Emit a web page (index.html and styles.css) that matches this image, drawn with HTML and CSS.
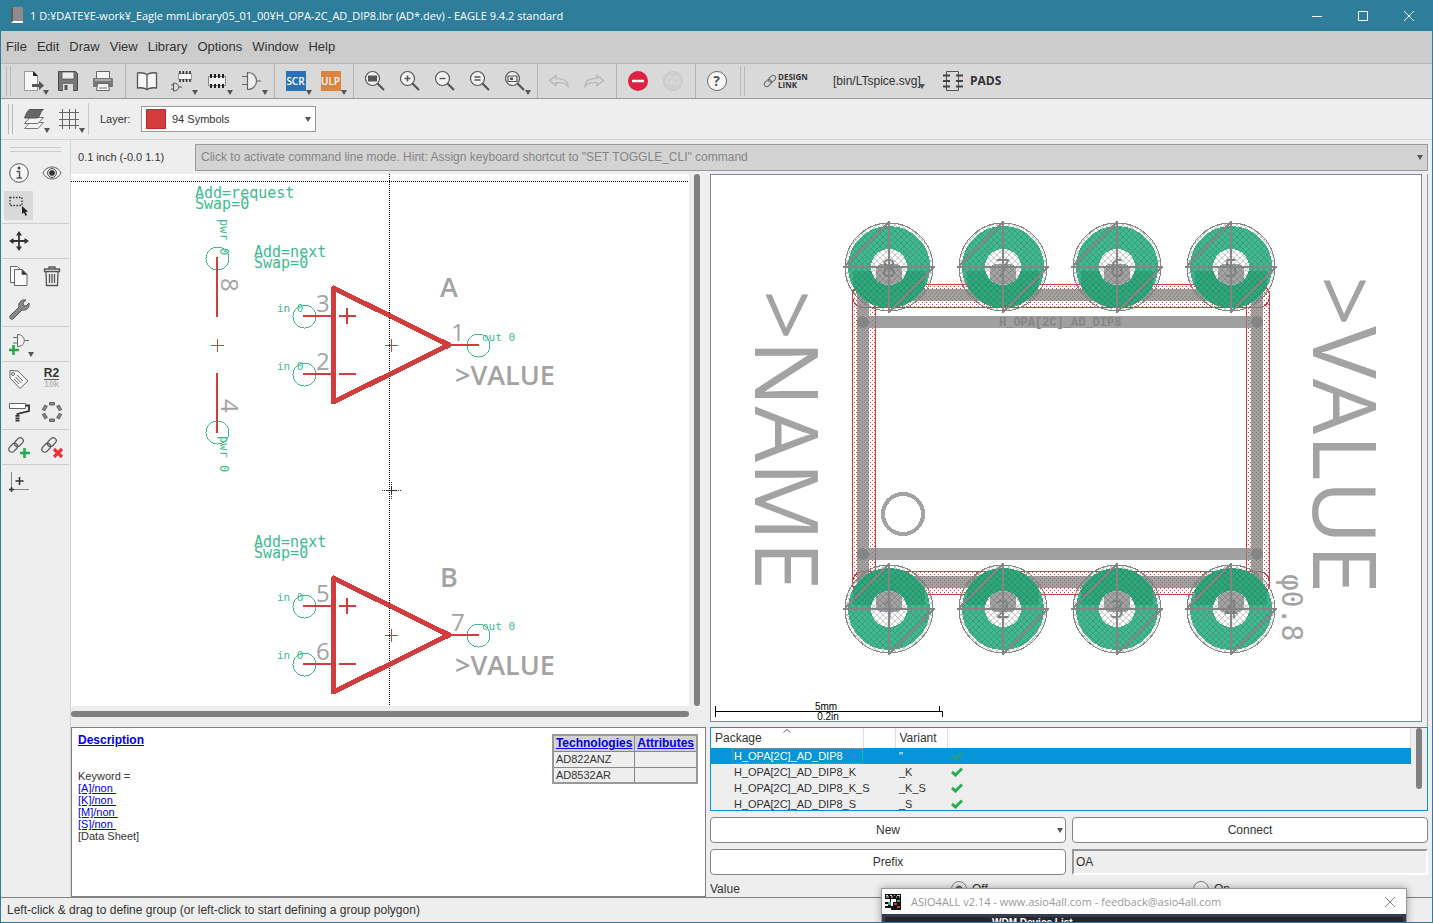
FILE: index.html
```html
<!DOCTYPE html>
<html lang="en">
<head>
<meta charset="utf-8">
<title>EAGLE 9.4.2 standard</title>
<link rel="stylesheet" href="styles.css">
</head>
<body>
<div class="window">
  <header class="titlebar">
    <svg class="app-icon" viewBox="0 0 14 18"><path d="M1 2 3 0h10v14H3l-2 2z" fill="#8f8b8b"/><path d="M1 2 3 0v14l-2 2z" fill="#5d5a5a"/><path d="M3 14h10v2H1z" fill="#fff"/></svg>
    <h1 class="title">1 D:¥DATE¥E-work¥_Eagle mmLibrary05_01_00¥H_OPA-2C_AD_DIP8.lbr (AD*.dev) - EAGLE 9.4.2 standard</h1>
    <div class="win-buttons">
      <button class="win-btn" aria-label="Minimize"><svg viewBox="0 0 12 12"><path d="M1 6.500h10"/></svg></button>
      <button class="win-btn" aria-label="Maximize"><svg viewBox="0 0 12 12"><path d="M1.500 1.500h9v9h-9z"/></svg></button>
      <button class="win-btn" aria-label="Close"><svg viewBox="0 0 12 12"><path d="m1 1 10 10M11 1 1 11"/></svg></button>
    </div>
  </header>

  <nav class="menubar">
    <a href="#file">File</a><a href="#edit">Edit</a><a href="#draw">Draw</a><a href="#view">View</a><a href="#library">Library</a><a href="#options">Options</a><a href="#window">Window</a><a href="#help">Help</a>
  </nav>

  <div class="toolbar">
    <span class="grip"></span>
    <button class="tool drop" aria-label="Open"><svg viewBox="0 0 22 22"><path d="M2.500 1.500h9l4 4v15h-13z" fill="#f7f7f7" stroke="#999"/><path d="M11 1v5h5z" fill="#222"/><path d="M10 14h7v-3l5 4.500-5 4.500v-3h-7z" fill="#555"/></svg></button>
    <button class="tool" aria-label="Save"><svg viewBox="0 0 22 22"><path d="M1.500 1.500h17l2 2v17h-19z" fill="#777" stroke="#4a4a4a"/><path d="M5 2h12v7H5z" fill="#eee" stroke="#555" stroke-width=".8"/><path d="M6 14h10v7H6z" fill="#ddd"/><path d="M7.500 15h3v5h-3z" fill="#555"/></svg></button>
    <button class="tool" aria-label="Print"><svg viewBox="0 0 22 22"><path d="M4.500 1.500h13v7h-13z" fill="#f4f4f4" stroke="#666"/><rect x="1" y="8" width="20" height="9" rx="1" fill="#777"/><path d="M3 10h16" stroke="#ddd"/><path d="M5.500 13.500h11l1 7h-13z" fill="#f4f4f4" stroke="#666"/><path d="M7 18h8" stroke="#777"/></svg></button>
    <span class="sep"></span>
    <button class="tool" aria-label="Library"><svg viewBox="0 0 22 22" fill="#f7f7f7" stroke="#555" stroke-width="1.300"><path d="M11 4.500C8 2.500 5 2.500 1.500 3v15c3.500-.5 6.500-.5 9.500 1.500 3-2 6-2 9.500-1.500V3C17 2.500 14 2.500 11 4.500zv15"/></svg></button>
    <button class="tool drop" aria-label="Device"><svg viewBox="0 0 22 22" fill="none" stroke="#333"><path d="M7.500 3.500h13v6h-13z" fill="#f7f7f7" stroke="#999"/><path d="M9 1v3M12.300 1v3M15.600 1v3M19 1v3M9 9v3M12.300 9v3M15.600 9v3M19 9v3" stroke-width="1.600"/><path d="M2.500 13v8c7 0 7-8 0-8zM0 15h2.500M0 19h2.500M8 17h3" stroke="#555"/></svg></button>
    <button class="tool drop" aria-label="Package"><svg viewBox="0 0 22 22" stroke="#222"><path d="M2.500 6.500h17v9h-17z" fill="#f0f0f0" stroke="#888"/><path d="M5 4v4M9 4v4M13 4v4M17 4v4M5 14v4M9 14v4M13 14v4M17 14v4" stroke-width="2"/></svg></button>
    <button class="tool drop" aria-label="Symbol"><svg viewBox="0 0 22 22" fill="#eee" stroke="#666" stroke-width="1.200"><path d="M6.500 2.500v17c12 0 12-17 0-17zM1 6.500h5.500M1 14.500h5.500M15.500 11H20"/></svg></button>
    <span class="sep"></span>
    <button class="tool drop"><span class="chip scr">SCR</span></button>
    <button class="tool drop"><span class="chip ulp">ULP</span></button>
    <span class="sep"></span>
    <button class="tool" aria-label="Zoom fit"><svg viewBox="0 0 22 22"><use href="#lens"/><path d="M4 5.500h9v6H4z" fill="#555"/></svg></button>
    <button class="tool" aria-label="Zoom in"><svg viewBox="0 0 22 22"><use href="#lens"/><path d="M8.500 5.500v6M5.500 8.500h6" stroke="#555" stroke-width="1.400"/></svg></button>
    <button class="tool" aria-label="Zoom out"><svg viewBox="0 0 22 22"><use href="#lens"/><path d="M5.500 8.500h6" stroke="#555" stroke-width="1.400"/></svg></button>
    <button class="tool" aria-label="Zoom redraw"><svg viewBox="0 0 22 22"><use href="#lens"/><path d="M5.500 7h6M5.500 10h6" stroke="#555" stroke-width="1.400"/></svg></button>
    <button class="tool drop" aria-label="Zoom select"><svg viewBox="0 0 22 22"><use href="#lens"/><path d="M4 6h9v5.500H4z" fill="#eee" stroke="#555" stroke-width="1.200"/><path d="M6 7.500h3v2.500H6z" fill="#555"/></svg></button>
    <span class="sep"></span>
    <button class="tool" aria-label="Undo"><svg viewBox="0 0 22 22" fill="none" stroke="#b3b3b3" stroke-width="1.200"><path d="M1.500 10.500 8 5.500v3c8 0 12 2 12 8-3-4-6-4-12-4v3z"/></svg></button>
    <button class="tool" aria-label="Redo"><svg viewBox="0 0 22 22" fill="none" stroke="#b3b3b3" stroke-width="1.200"><path d="M20.500 10.500 14 5.500v3c-8 0-12 2-12 8 3-4 6-4 12-4v3z"/></svg></button>
    <span class="sep"></span>
    <button class="tool" aria-label="Stop"><svg viewBox="0 0 22 22"><circle cx="11" cy="11" r="10" fill="#dd2140"/><path d="M5 11h12" stroke="#fff" stroke-width="2.500"/></svg></button>
    <button class="tool"><span class="go">GO</span></button>
    <span class="sep"></span>
    <button class="tool"><span class="help">?</span></button>
    <span class="grip late"></span>
    <button class="tool-text design"><svg viewBox="0 0 14 14" fill="none" stroke="#666"><g transform="rotate(-45 7 7)"><rect x="0" y="4.500" width="8" height="5" rx="2.500"/><rect x="6" y="4.500" width="8" height="5" rx="2.500"/></g></svg><span>DESIGN<br>LINK</span></button>
    <button class="tool-text spice drop">[bin/LTspice.svg]</button>
    <button class="tool-text pads"><svg viewBox="0 0 20 22" fill="none" stroke="#555"><path d="M3.500 1.500h12v19h-12z"/><path d="M0 5.500h7M0 11h7M0 16.500h7M13 5.500h7M13 11h7M13 16.500h7" stroke="#444" stroke-width="2"/></svg><span>PADS</span></button>
  </div>

  <div class="toolbar second">
    <span class="grip"></span>
    <button class="tool drop" aria-label="Layers"><svg viewBox="0 0 22 22" stroke="#777"><path d="M1.500 20.500 7 14.500h13.500L15 20.500z" fill="#f5f5f5"/><path d="M1.500 15.500 7 9.500h13.500L15 15.500z" fill="#f5f5f5"/><path d="M1.500 10C4 3.500 5 1.500 8 1.500h12.500C17 3 17 10 14 10z" fill="#666" stroke="#555"/></svg></button>
    <button class="tool drop" aria-label="Grid"><svg viewBox="0 0 22 22" stroke="#666"><path d="M4.500 1v20M11.500 1v20M17.500 1v20M1 4.500h20M1 11.500h20M1 17.500h20"/></svg></button>
    <span class="sep"></span>
    <label class="layer-label" for="layer">Layer:</label>
    <span class="layer-box"><select id="layer"><option>94 Symbols</option></select><span class="swatch"></span></span>
  </div>

  <main class="workspace">
    <aside class="palette">
      <span class="hgrip"></span>
      <div class="pgroup">
        <button aria-label="Info"><svg viewBox="0 0 22 22"><circle cx="11" cy="11" r="9.300" fill="#f7f7f7" stroke="#555"/><circle cx="11" cy="6" r="1.500" fill="#444"/><path d="M8.500 9.500h3V16M8.500 16h5.500" stroke="#555" stroke-width="1.500" fill="none"/></svg></button>
        <button aria-label="Show"><svg viewBox="0 0 22 22"><path d="M2 11c4-8 14-8 18 0-4 8-14 8-18 0z" fill="#f7f7f7" stroke="#555"/><circle cx="11" cy="11" r="4.500" fill="#ddd" stroke="#555"/><circle cx="11" cy="11" r="2.800" fill="#333"/></svg></button>
        <button class="active" aria-label="Group"><svg viewBox="0 0 22 22"><path d="M2 2.500h12v8H2z" fill="none" stroke="#333" stroke-width="1.300" stroke-dasharray="1.500 1.500"/><path d="M14 11v8l2-1.500 1.500 3.500 1.500-1-1.500-3 2.500-.5z" fill="#222"/></svg></button>
      </div>
      <div class="pgroup"><button aria-label="Move"><svg viewBox="0 0 22 22"><path d="M11 3v16M3 11h16" stroke="#333" stroke-width="1.800"/><path d="m11 1 3 4.500H8zM11 21l3-4.500H8zM1 11l4.500-3v6zM21 11l-4.500-3v6z" fill="#333"/></svg></button></div>
      <div class="pgroup">
        <button aria-label="Copy"><svg viewBox="0 0 22 22" fill="#fafafa" stroke="#666"><path d="M2.500 1.500h7l3 3v13h-10z"/><path d="M6.500 4.500H14l5 5v11H6.500z"/><path d="M14 4.500v5h5z" fill="#333"/></svg></button>
        <button aria-label="Delete"><svg viewBox="0 0 22 22" fill="none" stroke="#555" stroke-width="1.300"><path d="M8 3.500V2h6v1.500M3.500 4h15v2.500h-15zM5 6.500l.5 14h11l.5-14M8.500 9v9M11 9v9M13.500 9v9"/></svg></button>
        <button aria-label="Change"><svg viewBox="0 0 22 22"><path d="M2 18 11 9c-1-4 2-8 7-7l-3 3 .5 2.500L18 8l3-3c1 5-3 8-7 7l-9 9c-2 1-4-1-3-3z" fill="#888" stroke="#555"/></svg></button>
      </div>
      <div class="pgroup"><button class="drop" aria-label="Add gate"><svg viewBox="0 0 22 22" fill="#f2f2f2" stroke="#666"><path d="M9.500 1.500v12c9 0 9-12 0-12zM5 4.500h4.500M5 10h4.500M16.500 7.500H21"/><path d="M5.500 12v10M1 17h10" stroke="#28a850" stroke-width="2.600"/></svg></button></div>
      <div class="pgroup">
        <button aria-label="Name"><svg viewBox="0 0 22 22" fill="#f7f7f7" stroke="#666"><path d="M2 2.500 10 3l10 10-8 7.500L2 10z"/><circle cx="5" cy="6" r="1.500"/><path d="m9 7 6 6M7.500 9l6 6M6 11l5 5"/></svg></button>
        <button class="r2"><b>R2</b><small>10k</small></button>
        <button aria-label="Paint"><svg viewBox="0 0 22 22" fill="none" stroke="#333"><path d="M1.500 2.500h16v5h-16z" fill="#fff" stroke="#666"/><path d="M18 4.500h3V10L9.500 13v2" stroke-width="1.800"/><path d="M9.500 14v7" stroke-width="4" stroke-dasharray="1.800 .6"/></svg></button>
        <button aria-label="Ring"><svg viewBox="0 0 22 22" fill="#888" stroke="#666"><g id="seg"><path d="M8.500 1.500h5v2.500h-5zM8.500 18h5v2.500h-5z"/></g><use href="#seg" transform="rotate(60 11 11)"/><use href="#seg" transform="rotate(120 11 11)"/></svg></button>
      </div>
      <div class="pgroup">
        <button aria-label="Connect"><svg viewBox="0 0 22 22"><use href="#chain"/><path d="M16.500 12v10M12 17h10" stroke="#28a850" stroke-width="2.600"/></svg></button>
        <button aria-label="Disconnect"><svg viewBox="0 0 22 22"><use href="#chain"/><path d="m13 13 8 8M21 13l-8 8" stroke="#ee3030" stroke-width="3.200"/></svg></button>
      </div>
      <div class="pgroup"><button aria-label="Mark"><svg viewBox="0 0 22 22" stroke="#333"><path d="M3.500 1v15M6 18.500h15" stroke="#888"/><path d="M11.500 6v8M7.500 10h8M3.500 16v5M1 18.500h5" stroke-width="1.500"/></svg></button></div>
    </aside>

    <section class="work">
      <div class="command">
        <label for="cmd">0.1 inch (-0.0 1.1)</label>
        <span class="cmd-box"><input id="cmd" type="text" placeholder="Click to activate command line mode. Hint: Assign keyboard shortcut to &quot;SET TOGGLE_CLI&quot; command"></span>
      </div>

      <div class="panes">
        <div class="left">
          <div class="schematic">
            <svg class="sheet" role="img" aria-label="Device symbols">
              <g transform="translate(-71 -174)">
                <path class="guide" d="M71 181.500h2000M389.500 174v2000"/>
                <path d="M382 490.500h19M391.500 482v18" stroke="#333" fill="none" stroke-dasharray="1 1"/>
                <path d="M387 490.500h9M391.500 486v9" stroke="#333" fill="none"/>
                <g class="pin-text attr"><text x="195" y="198">Add=request</text><text x="195" y="209">Swap=0</text><text x="254" y="257">Add=next</text><text x="254" y="268">Swap=0</text><text x="254" y="547">Add=next</text><text x="254" y="558">Swap=0</text></g>
                <g class="pin-text pwr"><text transform="translate(220 219) rotate(90)">pwr 0</text><text transform="translate(220 436) rotate(90)">pwr 0</text></g>
                <g class="pin"><circle cx="217.500" cy="258.500" r="11.500"/><circle cx="217.500" cy="432.500" r="11.500"/></g>
                <g class="num"><text transform="translate(221 278) rotate(90)">8</text><text transform="translate(221 399) rotate(90)">4</text></g>
                <path class="wire" d="M217 257v60M217 373v60"/>
                <path class="origin" d="M211 345.500h13M217.500 339v13"/>
                <g id="amp">
                  <g class="pin"><circle cx="304.500" cy="316.500" r="11.500"/><circle cx="304.500" cy="374.500" r="11.500"/><circle cx="478.500" cy="345.500" r="11.500"/></g>
                  <path class="body" d="M333.500 288v114L449 345z"/>
                  <path class="wire" d="M303 316h29M303 374h29M451 345h28M339 316h17M347 308v16M339 374h17"/>
                  <path class="origin" d="M385 345.500h13M391.500 339v13"/>
                </g>
                <use href="#amp" y="290"/>
                <g class="pin-text io"><text x="277" y="312">in 0</text><text x="277" y="370">in 0</text><text x="482" y="341">out 0</text><text x="277" y="601">in 0</text><text x="277" y="659">in 0</text><text x="482" y="630">out 0</text></g>
                <g class="num"><text x="316" y="312">3</text><text x="316" y="370">2</text><text x="451" y="341">1</text><text x="316" y="602">5</text><text x="316" y="660">6</text><text x="451" y="631">7</text></g>
                <g class="ref"><text x="440" y="297">A</text><text x="440" y="587">B</text><text x="455" y="385">&gt;VALUE</text><text x="455" y="675">&gt;VALUE</text></g>
              </g>
            </svg>
            <div class="vscroll"></div>
            <div class="hscroll"></div>
          </div>
          <div class="description">
            <div class="desc-text">
              <a class="desc-head" href="#description">Description</a>
              <p>Keyword =<br><a href="#a">[A]/non&nbsp;</a><br><a href="#k">[K]/non&nbsp;</a><br><a href="#m">[M]/non&nbsp;</a><br><a href="#s">[S]/non&nbsp;</a><br>[Data Sheet]</p>
            </div>
            <table class="tech">
              <thead><tr><th><a href="#technologies">Technologies</a></th><th><a href="#attributes">Attributes</a></th></tr></thead>
              <tbody><tr><td>AD822ANZ</td><td></td></tr><tr><td>AD8532AR</td><td></td></tr></tbody>
            </table>
          </div>
        </div>

        <div class="right">
          <div class="board-wrap">
          <div class="board">
            <svg class="sheet" role="img" aria-label="Package footprint">
              <defs>
                <pattern id="dots" width="4" height="4" patternUnits="userSpaceOnUse"><path d="M0 0h1v1H0zM2 2h1v1H2z" fill="#d33c3c"/></pattern>
                <pattern id="hatch" width="6" height="6" patternUnits="userSpaceOnUse"><path d="M-1-1l8 8M-1 7l8-8" stroke="#555" stroke-opacity=".4" stroke-width=".8"/></pattern>
                <clipPath id="ring"><path clip-rule="evenodd" d="M-41 0a41 41 0 1 0 82 0a41 41 0 1 0-82 0zM-18 0a18 18 0 1 0 36 0a18 18 0 1 0-36 0z"/></clipPath>
                <clipPath id="hole"><circle r="18"/></clipPath>
                <g id="copper">
                  <circle r="29.500" fill="none" stroke="#3dbb8f" stroke-width="23"/>
                  <rect x="-36" y="4" width="72" height="40" fill="#2aa97c" clip-path="url(#ring)"/>
                  <circle r="18" fill="#fff"/>
                  <path d="M-13 3a6 6 0 0 1 6-6H7a6 6 0 0 1 6 6v16h-26z" fill="#a3a3a3" clip-path="url(#hole)"/>
                </g>
                <g id="marks" fill="none" stroke="#858585">
                  <circle r="44" fill="url(#hatch)"/>
                  <path d="M-46 0h92M0-46v92M-44-1 0-45M0 45 44 1" stroke-width="2"/>
                </g>
              </defs>
              <g transform="translate(-711 -175)">
                <g fill="url(#dots)" stroke="#d33c3c">
                  <rect x="852.500" y="284.500" width="417" height="23" rx="11"/>
                  <rect x="852.500" y="571.500" width="417" height="23" rx="11"/>
                  <rect x="852.500" y="288.500" width="23" height="300" rx="4"/>
                  <rect x="1246.500" y="288.500" width="23" height="300" rx="4"/>
                </g>
                <g fill="none" stroke="#858585" stroke-opacity=".78" stroke-width="12">
                  <path d="M863 295h394v287H863z"/>
                  <path d="M869 322h382M869 554h382"/>
                </g>
                <g fill="#858585"><circle cx="863" cy="322" r="6"/><circle cx="1257" cy="322" r="6"/><circle cx="863" cy="554" r="6"/><circle cx="1257" cy="554" r="6"/></g>
                <circle cx="903" cy="514" r="20" fill="none" stroke="#a3a3a3" stroke-width="4"/>
                <text class="pkg-name" x="999" y="326">H_OPA[2C]_AD_DIP8</text>
                <use href="#copper" transform="translate(889 267)"/><use href="#copper" transform="translate(1003 267)"/><use href="#copper" transform="translate(1117 267)"/><use href="#copper" transform="translate(1231 267)"/>
                <use href="#copper" transform="translate(889 609) scale(1 -1)"/><use href="#copper" transform="translate(1003 609) scale(1 -1)"/><use href="#copper" transform="translate(1117 609) scale(1 -1)"/><use href="#copper" transform="translate(1231 609) scale(1 -1)"/>
                <g class="pad-num"><text x="889" y="277">8</text><text x="1003" y="277">7</text><text x="1117" y="277">6</text><text x="1231" y="277">5</text><text x="889" y="618">1</text><text x="1003" y="618">2</text><text x="1117" y="618">3</text><text x="1231" y="618">4</text></g>
                <use href="#marks" transform="translate(889 267)"/><use href="#marks" transform="translate(1003 267)"/><use href="#marks" transform="translate(1117 267)"/><use href="#marks" transform="translate(1231 267)"/>
                <use href="#marks" transform="translate(889 609)"/><use href="#marks" transform="translate(1003 609)"/><use href="#marks" transform="translate(1117 609)"/><use href="#marks" transform="translate(1231 609)"/>
                <g class="big"><text transform="translate(755 290) rotate(90)">&gt;NAME</text><text transform="translate(1313 276) rotate(90)">&gt;VALUE</text></g>
                <text class="drill" transform="translate(1282 574) rotate(90)">φ0.8</text>
                <path d="M715.500 706v11M715 711.500h228M939.500 706v6M942.500 711v6" stroke="#000" fill="none"/>
                <g class="scale"><text x="826" y="710">5mm</text><text x="828" y="720">0.2in</text></g>
              </g>
            </svg>
          </div>
          </div>

          <div class="packages">
            <div class="list">
              <table>
                <thead><tr><th class="c-name">Package<svg class="sort" viewBox="0 0 8 4"><path d="m.5 3.500 3.500-3 3.500 3" fill="none" stroke="#666"/></svg></th><th class="c-gap"></th><th class="c-var">Variant</th><th></th></tr></thead>
                <tbody>
                  <tr class="sel"><td><span>H_OPA[2C]_AD_DIP8</span></td><td></td><td>"</td><td><svg class="check" viewBox="0 0 12 10"><path d="m1 5 3.500 3L11 1.500"/></svg></td></tr>
                  <tr><td><span>H_OPA[2C]_AD_DIP8_K</span></td><td></td><td>_K</td><td><svg class="check" viewBox="0 0 12 10"><path d="m1 5 3.500 3L11 1.500"/></svg></td></tr>
                  <tr><td><span>H_OPA[2C]_AD_DIP8_K_S</span></td><td></td><td>_K_S</td><td><svg class="check" viewBox="0 0 12 10"><path d="m1 5 3.500 3L11 1.500"/></svg></td></tr>
                  <tr><td><span>H_OPA[2C]_AD_DIP8_S</span></td><td></td><td>_S</td><td><svg class="check" viewBox="0 0 12 10"><path d="m1 5 3.500 3L11 1.500"/></svg></td></tr>
                </tbody>
              </table>
              <div class="list-scroll"><span></span></div>
            </div>
            <div class="form">
              <button class="btn new">New</button>
              <button class="btn">Connect</button>
              <button class="btn">Prefix</button>
              <input class="prefix" type="text" value="OA" aria-label="Prefix value">
            </div>
            <div class="value-row">
              <span>Value</span>
              <label><input type="radio" name="value" checked>Off</label>
              <label><input type="radio" name="value">On</label>
            </div>
          </div>
        </div>
      </div>
    </section>
  </main>

  <footer class="status">Left-click &amp; drag to define group (or left-click to start defining a group polygon)</footer>

  <div class="popup">
    <div class="popup-title">
      <svg class="asio" viewBox="0 0 16 16"><path d="M0 0h16v16H0z" fill="#111"/><path d="M1 1.500h2M5 1.500h2M9 1.500h1M12 1.500h3M1 3h3M6 3h2M11 3h1M14 3h1" stroke="#ddd"/><path d="M0 5h5v3H0zM0 10h3v2H0zM6 5h5v3H8v4H6zM0 14h6v2H0z" fill="#fff"/><path d="M3 8h3v3H3zM12 6h3v2h-3z" fill="#3a8"/><path d="M9 9h3v2H9zM12 12h3v2h-3z" fill="#c33"/></svg>
      <span>ASIO4ALL v2.14 - www.asio4all.com - feedback@asio4all.com</span>
      <button aria-label="Close"><svg viewBox="0 0 12 12"><path d="m1 1 10 10M11 1 1 11" stroke="#888" fill="none"/></svg></button>
    </div>
    <div class="popup-body"><div>WDM Device List</div></div>
  </div>
</div>

<svg class="defs" aria-hidden="true">
  <defs>
    <g id="lens"><circle cx="8.500" cy="8.500" r="7" fill="#f3f3f3" stroke="#555" stroke-width="1.200"/><path d="m13.500 13.500 6.500 6.500" stroke="#555" stroke-width="2.200"/></g>
    <g id="chain" fill="none" stroke="#555" stroke-width="1.200"><g transform="rotate(-45 8 9)"><rect x="-1" y="6" width="10" height="6" rx="3"/><rect x="7" y="6" width="10" height="6" rx="3"/></g></g>
  </defs>
</svg>
</body>
</html>
```

FILE: styles.css
```css
* { box-sizing: border-box; }
body { margin: 0; font: 11px/12px "Liberation Sans", Arial, sans-serif; color: #333; }
button { border: 0; background: none; padding: 0; font: inherit; color: inherit; }
svg { display: block; }
.defs { position: absolute; width: 0; height: 0; }
.window { position: relative; display: flex; flex-direction: column; height: 100vh; background: #eee; border: 1px solid #2e7d9b; border-top: 0; overflow: hidden; }

.titlebar { display: flex; align-items: center; height: 31px; background: #2e7d9b; color: #fff; flex: none; }
.app-icon { width: 14px; height: 18px; margin: 0 6px 0 9px; }
.title { margin: 0; font: 11px/16px "Open Sans", "Noto Sans", sans-serif; white-space: nowrap; }
.win-buttons { display: flex; margin-left: auto; }
.win-btn { width: 46px; height: 31px; display: grid; place-items: center; }
.win-btn svg { width: 12px; height: 12px; fill: none; stroke: #fff; }

.menubar { display: flex; align-items: center; gap: 10px; height: 32px; padding: 0 5px; background: #ccc; flex: none; font-size: 13px; line-height: 16px; }
.menubar a { color: #333; text-decoration: none; }

.toolbar { display: flex; align-items: center; height: 36px; background: #d9d9d9; border-top: 1px solid #b5b5b5; border-bottom: 1px solid #999; flex: none; }
.toolbar.second { height: 41px; background: #eee; border-top: 0; border-bottom-color: #d5d5d5; }
.grip { width: 5px; height: 30px; margin: 0 4px 0 5px; border: solid #b8b8b8; border-width: 0 1px; flex: none; }
.grip.late { margin: 0 18px 0 6px; }
.second .grip { margin: 0 3px 0 7px; }
.sep { width: 1px; align-self: stretch; margin: 0 3px 0 5px; background: #b5b5b5; flex: none; }
.second .sep { margin: 4px 11px 4px 2px; background: #ccc; }
.tool { position: relative; width: 35px; height: 33px; display: grid; place-items: center; flex: none; }
.tool svg { width: 22px; height: 22px; }
.drop { position: relative; }
.drop::after { content: ""; position: absolute; right: 1px; bottom: 3px; border: 3px solid transparent; border-top: 5px solid #555; border-bottom: 0; }
.chip { width: 20px; height: 20px; font: 600 10px/20px "Open Sans", sans-serif; color: #fff; text-align: center; }
.scr { background: #2a72b8; }
.ulp { background: #dc8340; }
.go { width: 20px; height: 20px; border: 1px solid #c6c6c6; border-radius: 50%; font: 9px/18px "Open Sans", sans-serif; color: #e2e2e2; background: #d0d0d0; }
.help { width: 20px; height: 20px; border: 1px solid #666; border-radius: 50%; background: #f7f7f7; font: bold 14px/18px "Open Sans", sans-serif; color: #555; }
.tool-text { display: flex; align-items: center; text-align: left; flex: none; color: #333; }
.design { width: 70px; gap: 1px; font: bold 8px/8px "Open Sans", sans-serif; }
.design svg { width: 14px; height: 14px; }
.spice { height: 20px; width: 93px; font-size: 12px; }
.spice::after { bottom: 2px; }
.pads { gap: 7px; margin-left: 17px; font: bold 12px/16px "Open Sans", sans-serif; }
.pads svg { width: 20px; height: 22px; }
.layer-label { width: 41px; }
.layer-box { position: relative; width: 175px; height: 26px; }
.layer-box select { width: 100%; height: 100%; appearance: none; border: 1px solid #999; background: #fff; padding: 0 0 0 30px; font: inherit; color: #333; }
.layer-box::after, .cmd-box::after, .new::after { content: ""; position: absolute; right: 5px; top: 50%; margin-top: -2px; border: 3px solid transparent; border-top: 5px solid #555; border-bottom: 0; }
.swatch { position: absolute; left: 5px; top: 3px; width: 20px; height: 20px; background: #d33c3c; border: 1px solid #c22; }

.workspace { display: flex; flex: 1; min-height: 0; }
.palette { width: 70px; padding: 7px 1px 0; border-right: 1px solid #d5d5d5; flex: none; }
.hgrip { display: block; height: 5px; margin: 0 8px 4px; border: solid #ccc; border-width: 1px 0; }
.pgroup { display: flex; flex-wrap: wrap; border-bottom: 1px solid #ccc; padding-bottom: 1px; }
.pgroup:last-child { border: 0; }
.pgroup button { width: 33px; height: 33px; display: grid; place-items: center; }
.pgroup svg { width: 22px; height: 22px; }
.pgroup .active { background: #d9d9d9; border: 2px solid #eee; }
.r2 b { display: block; font-size: 12px; line-height: 10px; border-bottom: 1px solid #555; padding-bottom: 1px; }
.pgroup .r2 { align-content: center; }
.r2 small { font-weight: bold; font-size: 9px; line-height: 9px; color: #bbb; }

.work { display: flex; flex-direction: column; flex: 1; min-width: 0; }
.command { display: flex; align-items: center; height: 34px; padding: 0 4px 0 7px; flex: none; }
.command label { width: 117px; }
.cmd-box { position: relative; flex: 1; height: 27px; }
.cmd-box input { width: 100%; height: 100%; border: 1px solid #999; background: #d3d3d3; padding: 0 5px; font: inherit; font-size: 12px; }
.cmd-box input::placeholder { color: #858585; opacity: 1; }

.panes { display: grid; grid-template-columns: minmax(0, 635fr) minmax(0, 718fr); gap: 4px; flex: 1; min-height: 0; padding-right: 4px; }
.left, .right { display: flex; flex-direction: column; min-height: 0; min-width: 0; }
.schematic { flex: 1; display: grid; grid-template: minmax(0, 1fr) 21px / minmax(0, 1fr) 17px; min-height: 0; }
.sheet { width: 100%; height: 100%; background: #fff; overflow: hidden; shape-rendering: crispEdges; }
.vscroll { width: 6px; margin: 0 5px; border-radius: 3px; background: #808080; }
.hscroll { height: 6px; margin-top: 5px; border-radius: 3px; background: #808080; }
.guide { stroke: #000; stroke-dasharray: 1 1; fill: none; }
.pin-text { font-family: "DejaVu Sans Mono", monospace; fill: #3dbb8f; }
.attr { font-size: 15px; }
.pwr { font-size: 12px; }
.io { font-size: 11px; }
.pin { fill: none; stroke: #3dbb8f; }
.wire { stroke: #d33c3c; stroke-width: 2; fill: none; }
.origin { stroke: #d33c3c; fill: none; }
.body { stroke: #d33c3c; stroke-width: 5; fill: none; stroke-linejoin: round; }
.num { font: 24px "Open Sans", sans-serif; fill: #a3a3a3; }
.ref { font: 600 27px "Open Sans", sans-serif; fill: #a3a3a3; }
.big { font: 88px "Open Sans", sans-serif; fill: #a3a3a3; }
.drill { font: 28px "DejaVu Sans Mono", monospace; fill: #a3a3a3; }
.pkg-name { font: bold 12px "Liberation Mono", monospace; fill: #858585; }
.pad-num { font: 25px "Open Sans", sans-serif; fill: #858585; text-anchor: middle; }
.scale { font-size: 10px; fill: #000; text-anchor: middle; }

.description { display: flex; justify-content: space-between; align-items: flex-start; height: 170px; padding: 6px; border: 1px solid #808080; background: #fff; flex: none; }
.description a { color: #00e; }
.desc-head { font-weight: bold; font-size: 12px; }
.desc-text p { margin: 24px 0 0; }
.tech { border-collapse: collapse; margin-right: 1px; border: 2px solid #999; background: #eee; }
.tech th, .tech td { height: 16px; padding: 0 2px; border: 1px solid #888; text-align: left; line-height: 12px; }
.tech th { background: #d3d3d3; font-size: 12px; }

.board-wrap { flex: 1; min-height: 0; padding: 0 5px 5px 0; border-right: 1px solid #999; }
.board { height: 100%; border: 1px solid #85859a; }
.packages { height: 170px; display: flex; flex-direction: column; gap: 6px; flex: none; overflow: hidden; }
.list { display: flex; height: 84px; border: 1px solid #0795d9; overflow: hidden; flex: none; }
.list table { width: 100%; border-collapse: collapse; table-layout: fixed; align-self: flex-start; }
.list th { height: 20px; padding: 0 4px; background: #fff; text-align: left; font-weight: normal; font-size: 12px; border-right: 1px solid #ddd; position: relative; }
.list td { height: 16px; padding: 0 4px; line-height: 14px; }
.list td:first-child { padding: 0 0 0 21px; }
.list td span { display: block; padding: 0 1px; border: 1px solid transparent; white-space: nowrap; }
.c-name { width: 152px; }
.c-gap { width: 32px; }
.c-var { width: 52px; }
.sort { position: absolute; left: 72px; top: 1px; width: 8px; height: 4px; }
.sel { background: #0795d9; color: #fff; }
.list .sel td span { border: 1px dotted #e08050; }
.check { width: 12px; height: 10px; fill: none; stroke: #28b050; stroke-width: 3; }
.sel .check { stroke: #20a080; }
.list-scroll { width: 16px; padding-left: 5px; flex: none; }
.list-scroll span { display: block; width: 6px; height: 61px; border-radius: 3px; background: #808080; }
.form { display: grid; grid-template-columns: 1fr 1fr; gap: 6px; flex: none; font-size: 12px; }
.btn { position: relative; height: 26px; border: 1px solid #858585; border-radius: 4px; background: #fff; }
.new::after { right: 2px; }
.prefix { min-width: 0; height: 26px; border: 2px solid #fff; border-top-color: #999; border-left-color: #999; background: #eee; padding: 0 2px; font: inherit; color: #333; }
.value-row { display: grid; grid-template-columns: 241px 242px 1fr; align-items: center; height: 16px; flex: none; font-size: 12px; }
.value-row label { display: flex; align-items: center; gap: 5px; }
.value-row input { appearance: none; width: 16px; height: 16px; margin: 0; border: 1px solid #808080; border-radius: 50%; background: #f5f5f5; }
.value-row input:checked { background: radial-gradient(#666 0 3px, #eee 4px); }

.status { height: 25px; padding: 0 6px; border-top: 1px solid #808080; font-size: 12px; line-height: 24px; flex: none; }
.popup { position: absolute; right: 25px; bottom: -1px; width: 526px; height: 35px; border: 1px solid #999; border-bottom: 0; background: #fff; box-shadow: 0 0 8px rgba(0, 0, 0, .35); overflow: hidden; }
.popup-title { display: flex; align-items: center; height: 25px; padding: 0 10px 0 3px; color: #999; font: 11px/16px "Open Sans", sans-serif; }
.popup-title span { margin-left: 10px; }
.popup-title button { margin-left: auto; }
.popup-title button svg { width: 12px; height: 12px; }
.asio { width: 16px; height: 16px; }
.popup-body { height: 30px; padding: 3px 3px 0; background: #373b4d; }
.popup-body div { background: #22262f; color: #fff; font-size: 10px; font-weight: bold; padding-left: 107px; }
```
